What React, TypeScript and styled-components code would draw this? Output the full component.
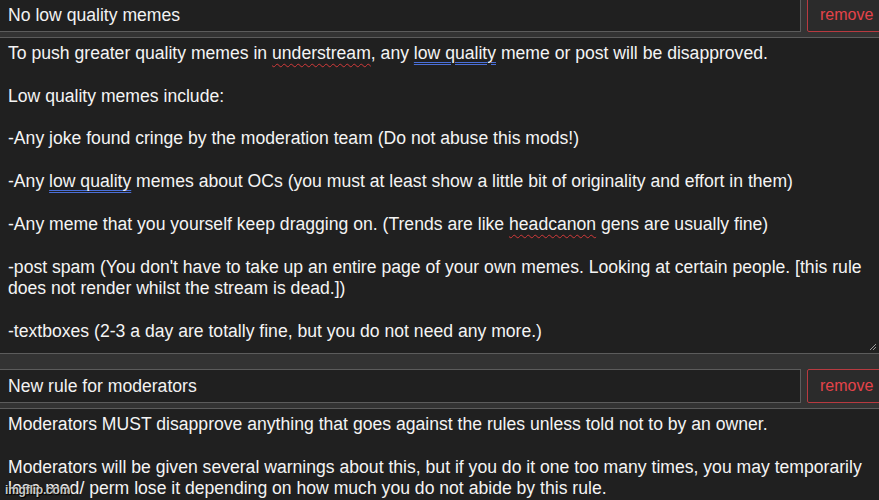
import React from "react";
import styled, { createGlobalStyle } from "styled-components";

const Global = createGlobalStyle`
  html, body { margin: 0; padding: 0; background: #333333; overflow: hidden; }
  body { width: 879px; height: 500px; }
`;

const Page = styled.div`
  width: 882px;
  margin-left: -2px;
  margin-top: -2px;
  display: flex;
  flex-direction: column;
  font-family: "Liberation Sans", Arial, sans-serif;
`;

const Rule = styled.section`
  display: flex;
  flex-direction: column;
  gap: 5px;
  margin-bottom: 15px;
`;

const TitleRow = styled.div`
  display: flex;
  gap: 6px;
  height: 34px;
  margin-right: -6px;
`;

const TitleInput = styled.div`
  flex: 1;
  box-sizing: border-box;
  background: #202020;
  border: 1px solid #5c5c5c;
  color: #f2f2f2;
  font-size: 17.6px;
  line-height: 32px;
  padding-left: 9px;
`;

const RemoveButton = styled.button`
  box-sizing: border-box;
  width: 79px;
  height: 34px;
  background: #2b2b2b;
  border: 1px solid #b83a40;
  border-radius: 2px;
  color: #e4434a;
  font-family: "Liberation Sans", Arial, sans-serif;
  font-size: 16px;
  text-align: left;
  padding: 0 0 1px 12px;
`;

const TextBox = styled.div<{ $h: number }>`
  position: relative;
  box-sizing: border-box;
  height: ${(p) => p.$h}px;
  background: #202020;
  border: 1px solid #5c5c5c;
  color: #f4f4f4;
  font-size: 17.6px;
  line-height: 21.36px;
  padding: 5px 12px 0 9px;
  white-space: pre-wrap;
  overflow: hidden;
`;

const Spell = styled.span`
  text-decoration: underline wavy #d23a3a;
  text-decoration-thickness: 1px;
  text-underline-offset: 4px;
`;

const Grammar = styled.span`
  text-decoration: underline double #4a6fd8;
  text-decoration-thickness: 1px;
  text-underline-offset: 3px;
`;

const Grip = styled.svg`
  position: absolute;
  right: 2px;
  bottom: 2px;
  width: 8px;
  height: 8px;
`;

const Watermark = styled.div`
  position: absolute;
  left: 5px;
  bottom: 3px;
  font-family: "Liberation Sans", Arial, sans-serif;
  font-size: 12px;
  font-weight: bold;
  color: rgba(235, 235, 235, 0.85);
  text-shadow: 0 0 2px #000, 1px 1px 1px #000;
  letter-spacing: -0.2px;
`;

const GripIcon = () => (
  <Grip viewBox="0 0 8 8">
    <path d="M7 1 L1 7 M7 4 L4 7" stroke="#9a9a9a" strokeWidth="1" fill="none" />
  </Grip>
);

export default function App() {
  return (
    <>
      <Global />
      <Page>
        <Rule>
          <TitleRow>
            <TitleInput>No low quality memes</TitleInput>
            <RemoveButton>remove</RemoveButton>
          </TitleRow>
          <TextBox $h={317}>
            {"To push greater quality memes in "}
            <Spell>understream</Spell>
            {", any "}
            <Grammar>low quality</Grammar>
            {" meme or post will be disapproved.\n\nLow quality memes include:\n\n-Any joke found cringe by the moderation team (Do not abuse this mods!)\n\n-Any "}
            <Grammar>low quality</Grammar>
            {" memes about OCs (you must at least show a little bit of originality and effort in them)\n\n-Any meme that you yourself keep dragging on. (Trends are like "}
            <Spell>headcanon</Spell>
            {" gens are usually fine)\n\n-post spam (You don't have to take up an entire page of your own memes. Looking at certain people. [this rule does not render whilst the stream is dead.])\n\n-textboxes (2-3 a day are totally fine, but you do not need any more.)"}
            <GripIcon />
          </TextBox>
        </Rule>
        <Rule>
          <TitleRow>
            <TitleInput>New rule for moderators</TitleInput>
            <RemoveButton>remove</RemoveButton>
          </TitleRow>
          <TextBox $h={120}>
            {"Moderators MUST disapprove anything that goes against the rules unless told not to by an owner.\n\nModerators will be given several warnings about this, but if you do it one too many times, you may temporarily lose mod/ perm lose it depending on how much you do not abide by this rule."}
          </TextBox>
        </Rule>
        <Watermark>imgflip.com</Watermark>
      </Page>
    </>
  );
}
